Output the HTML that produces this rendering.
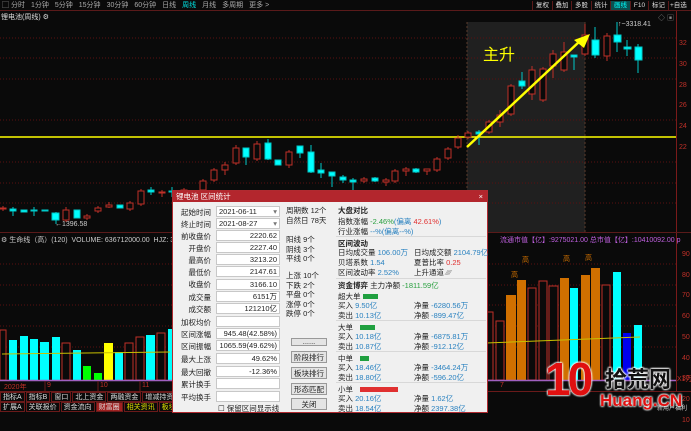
<!DOCTYPE html>
<html><head><meta charset="utf-8"><style>
*{margin:0;padding:0;box-sizing:border-box}
body{width:691px;height:413px;background:#0a0a0a;overflow:hidden;position:relative;font-family:"Liberation Sans","Noto Sans CJK SC",sans-serif;font-size:7px;color:#c8c8c8}
.a{position:absolute;white-space:nowrap}
#dlg{position:absolute;left:172px;top:190px;width:316px;height:223px;background:#f0f0f0;border:1px solid #b02a30;color:#222;font-size:7.5px}
#dlg .t{position:absolute;left:0;top:0;width:100%;height:11px;background:#b3262d;color:#fff;font-size:7.5px;padding-left:3px;line-height:11px}
.lb{position:absolute;left:0;width:38px;text-align:right}
.in{position:absolute;left:43px;width:64px;height:11px;background:#fff;border:1px solid #c8c8c8;text-align:right;padding-right:2px;line-height:10px;font-size:7.5px}
.bt{position:absolute;left:118px;width:36px;height:12px;background:#e4e4e4;border:1px solid #999;text-align:center;line-height:11px}
.bl{color:#2a82c0}.gr{color:#2aa040}.rd{color:#e03030}
.sep{position:absolute;left:163px;width:150px;height:1px;background:#d8d8d8}
.tb span{margin-right:6px}
.rb{position:absolute;top:1px;height:9px;border-left:1px solid #5a1a1a;color:#ddd;line-height:9px;font-size:6.5px;text-align:center;overflow:hidden}
.bb span{border:1px solid #6a1a1a;padding:0 2px;margin-right:1px;display:inline-block;height:10px;line-height:9px}
</style></head><body>
<svg class="a" style="left:0;top:0" width="691" height="413">
<rect x="467" y="22" width="118" height="210" fill="#202020"/>
<line x1="467" y1="22" x2="467" y2="232" stroke="#5a3a2a" stroke-dasharray="2,2"/>
<line x1="585" y1="22" x2="585" y2="232" stroke="#5a3a2a" stroke-dasharray="2,2"/>
<line x1="0" y1="10.5" x2="691" y2="10.5" stroke="#5a1a1a"/>
<g stroke="#5a1010" stroke-dasharray="1,2">
<line x1="0" y1="38" x2="676" y2="38"/><line x1="0" y1="58" x2="676" y2="58"/><line x1="0" y1="79" x2="676" y2="79"/><line x1="0" y1="120" x2="676" y2="120"/><line x1="0" y1="162" x2="676" y2="162"/><line x1="0" y1="183" x2="676" y2="183"/><line x1="0" y1="203" x2="676" y2="203"/>
<line x1="0" y1="264" x2="676" y2="264"/><line x1="0" y1="285" x2="676" y2="285"/><line x1="0" y1="305" x2="676" y2="305"/><line x1="0" y1="326" x2="676" y2="326"/><line x1="0" y1="347" x2="676" y2="347"/>
</g>
<line x1="676.5" y1="11" x2="676.5" y2="392" stroke="#7a1a1a"/>
<line x1="0" y1="232.5" x2="691" y2="232.5" stroke="#5a1a1a"/>
<line x1="0" y1="137" x2="676" y2="137" stroke="#ffff00" stroke-width="1.5"/>
<g stroke-width="1">
<g stroke="#c03028" fill="#0a0a0a">
<path d="M3 206V211M66 207V222M87 214V220M98 206V213M109 202V208M130 201V211M141 189V206M162 190V197M184 188V193M203 179V192M214 168V182M225 162V175M236 145V165M257 141V161M289 150V168M364 177V183M386 178V186M395 169V183M406 167V176M427 169V175M437 157V172M448 147V160M458 135V149M468 131V139M489 120V134M500 110V127M511 84V116M532 66V100M543 67V102M553 50V78M564 42V72M585 24V56M607 33V61"/>
<rect x="0" y="208" width="6" height="1"/><rect x="63" y="210" width="6" height="10"/><rect x="84" y="216" width="6" height="2"/><rect x="95" y="208" width="6" height="3"/><rect x="106" y="205" width="6" height="2"/><rect x="127" y="203" width="6" height="6"/><rect x="138" y="191" width="6" height="13"/><rect x="159" y="192" width="6" height="1"/><rect x="181" y="190" width="6" height="1"/><rect x="200" y="181" width="6" height="9"/><rect x="211" y="170" width="6" height="10"/><rect x="222" y="165" width="6" height="5"/><rect x="233" y="148" width="6" height="15"/><rect x="254" y="144" width="6" height="15"/><rect x="286" y="152" width="6" height="13"/><rect x="361" y="179" width="6" height="2"/><rect x="383" y="180" width="6" height="2"/><rect x="392" y="171" width="6" height="10"/><rect x="403" y="169" width="6" height="2"/><rect x="424" y="169" width="6" height="2"/><rect x="434" y="159" width="6" height="11"/><rect x="445" y="149" width="6" height="9"/><rect x="455" y="138" width="6" height="9"/><rect x="465" y="133" width="6" height="4"/><rect x="486" y="122" width="6" height="10"/><rect x="497" y="115" width="6" height="7"/><rect x="508" y="86" width="6" height="28"/><rect x="529" y="70" width="6" height="24"/><rect x="540" y="69" width="6" height="31"/><rect x="550" y="54" width="6" height="12"/><rect x="561" y="52" width="6" height="18"/><rect x="582" y="35" width="6" height="19"/><rect x="604" y="36" width="6" height="20"/>
</g>
<g stroke="#00c8c8" fill="#00ffff">
<path d="M13 207V216M34 207V216M56 212V224M151 187V195M172 187V197M246 148V165M268 139V160M300 146V158M311 145V173M321 163V178M332 172V187M343 175V183M353 178V190M375 177V182M416 168V173M479 130V145M522 72V89M574 55V70M595 27V58M617 22V52M627 40V56M638 44V73"/>
<rect x="10" y="209" width="6" height="2"/><rect x="21" y="210" width="6" height="2"/><rect x="31" y="210" width="6" height="1"/><rect x="42" y="210" width="6" height="1"/><rect x="52" y="213" width="7" height="7"/><rect x="74" y="210" width="6" height="8"/><rect x="117" y="205" width="6" height="3"/><rect x="148" y="190" width="6" height="2"/><rect x="169" y="191" width="6" height="1"/><rect x="243" y="148" width="6" height="9"/><rect x="265" y="143" width="6" height="16"/><rect x="275" y="160" width="6" height="5"/><rect x="297" y="146" width="6" height="7"/><rect x="308" y="152" width="6" height="20"/><rect x="318" y="170" width="6" height="3"/><rect x="329" y="172" width="6" height="4"/><rect x="340" y="177" width="6" height="3"/><rect x="350" y="180" width="6" height="2"/><rect x="372" y="178" width="6" height="3"/><rect x="413" y="169" width="6" height="3"/><rect x="476" y="132" width="6" height="2"/><rect x="519" y="81" width="6" height="5"/><rect x="571" y="55" width="6" height="2"/><rect x="592" y="40" width="7" height="15"/><rect x="614" y="35" width="7" height="7"/><rect x="624" y="47" width="7" height="2"/><rect x="635" y="47" width="7" height="13"/>
</g>
</g>
<line x1="467" y1="147" x2="580" y2="41" stroke="#ffff00" stroke-width="2.5"/>
<polygon points="590,34 574,40 584,48" fill="#ffff00"/>
<g stroke="#c03028" fill="#0a0a0a"><rect x="0" y="330" width="6" height="50"/><rect x="62" y="343" width="8" height="37"/><rect x="125" y="343" width="8" height="37"/><rect x="136" y="337" width="8" height="43"/><rect x="157" y="333" width="8" height="47"/><rect x="486" y="312" width="7" height="68"/><rect x="496" y="321" width="8" height="59"/><rect x="528" y="288" width="8" height="92"/><rect x="539" y="281" width="8" height="99"/><rect x="549" y="286" width="9" height="94"/><rect x="602" y="285" width="8" height="95"/></g>
<g fill="#00ffff"><rect x="9" y="340" width="8" height="40"/><rect x="20" y="336" width="8" height="44"/><rect x="30" y="339" width="8" height="41"/><rect x="40" y="342" width="9" height="38"/><rect x="52" y="337" width="8" height="43"/><rect x="73" y="350" width="8" height="30"/><rect x="115" y="352" width="8" height="28"/><rect x="146" y="335" width="9" height="45"/><rect x="168" y="329" width="7" height="51"/><rect x="570" y="288" width="8" height="92"/><rect x="613" y="272" width="8" height="108"/><rect x="634" y="325" width="8" height="55"/></g>
<g fill="#00ff00"><rect x="83" y="366" width="8" height="14"/><rect x="94" y="373" width="8" height="7"/></g>
<rect x="104" y="343" width="9" height="37" fill="#ffff00"/>
<g fill="#d07000"><rect x="506" y="295" width="10" height="85"/><rect x="517" y="280" width="9" height="100"/><rect x="560" y="278" width="9" height="102"/><rect x="581" y="275" width="9" height="105"/><rect x="591" y="268" width="9" height="112"/></g>
<rect x="623" y="333" width="8" height="47" fill="#0000ee"/>
<path d="M2 354L170 352M486 343L640 337" stroke="#c8c000" stroke-width="1"/>
<line x1="0" y1="380.5" x2="676" y2="380.5" stroke="#a060c0" stroke-width="1.5"/>
<line x1="0" y1="391.5" x2="691" y2="391.5" stroke="#6a1a1a"/>
<line x1="45" y1="381" x2="45" y2="391" stroke="#6a1a1a"/><line x1="98" y1="381" x2="98" y2="391" stroke="#6a1a1a"/><line x1="140" y1="381" x2="140" y2="391" stroke="#6a1a1a"/>
</svg>
<div class="a tb" style="left:2px;top:1px;line-height:9px;color:#aaa"><span>▢ 分时</span><span>1分钟</span><span>5分钟</span><span>15分钟</span><span>30分钟</span><span>60分钟</span><span>日线</span><span style="color:#00e0e0">周线</span><span>月线</span><span>多周期</span><span>更多 &gt;</span></div>
<div class="rb" style="left:532px;width:20px">复权</div><div class="rb" style="left:552px;width:19px">叠加</div><div class="rb" style="left:571px;width:20px">多股</div><div class="rb" style="left:591px;width:19px">统计</div><div class="rb" style="left:610px;width:20px;background:#0a5050;color:#00ffff">画线</div><div class="rb" style="left:630px;width:18px">F10</div><div class="rb" style="left:648px;width:20px">标记</div><div class="rb" style="left:668px;width:23px;text-align:left;padding-left:1px">+自选</div>
<div class="a" style="left:1px;top:12px;color:#ddd">锂电池(周线) ⚙</div>
<div class="a" style="left:658px;top:13px;color:#888">◇ ▣</div>
<div class="a" style="left:618px;top:21px;color:#ccc">↑~3318.41</div>
<div class="a" style="left:55px;top:221px;color:#ccc">←1396.58</div>
<div class="a" style="left:483px;top:41px;color:#ffff00;font-size:16px">主升</div>
<div class="a" style="left:679px;top:34px;color:#c03028;line-height:20.8px">32<br>30<br>28<br>26<br>24<br>22</div>
<div class="a" style="left:1px;top:235px;color:#ccc">⚙ 生命线（高）(120)&nbsp; VOLUME: 636712000.00&nbsp; HJZ: 3122</div>
<div class="a" style="left:500px;top:235px;color:#c060e0">流通市值【亿】:9275021.00 总市值【亿】:10410092.00 p</div>
<div class="a" style="left:682px;top:245px;color:#c03028;line-height:20.7px">90<br>80<br>70<br>60<br>50<br>40<br>30<br>20<br>10</div>
<div class="a" style="left:677px;top:374px;color:#c03028">X1万</div>
<div class="a" style="left:511px;top:270px;color:#d07000">高</div><div class="a" style="left:522px;top:255px;color:#d07000">高</div><div class="a" style="left:563px;top:254px;color:#d07000">高</div><div class="a" style="left:585px;top:253px;color:#d07000">高</div>
<div class="a" style="left:4px;top:382px;color:#c03028">2020年</div><div class="a" style="left:47px;top:382px;color:#c03028">9</div><div class="a" style="left:100px;top:382px;color:#c03028">10</div><div class="a" style="left:142px;top:382px;color:#c03028">11</div><div class="a" style="left:500px;top:382px;color:#c03028">7</div>
<div class="a bb" style="left:0;top:392px;color:#ddd"><span>指标A</span><span>指标B</span><span>窗口</span><span>北上资金</span><span>两融资金</span><span>增减持资金</span><span>打板资</span></div>
<div class="a bb" style="left:0;top:402px;color:#ddd"><span>扩展A</span><span>关联报价</span><span>资金流向</span><span style="background:#a02020">财富圈</span><span style="color:#e0e000">相关资讯</span><span style="color:#e0e000">板块资讯</span></div>
<div class="a" style="left:657px;top:403px;color:#ddd;font-size:6px">新用户福利</div>
<div class="a" style="left:545px;top:352px;color:#e01010;font-size:46px;font-weight:bold;letter-spacing:-3px;text-shadow:0 0 2px #fff,0 0 2px #fff,0 0 2px #fff">10</div>
<div class="a" style="left:605px;top:362px;color:#111;font-size:22px;font-weight:bold;text-shadow:0 0 2px #fff,0 0 2px #fff,0 0 2px #fff,0 0 2px #fff">拾荒网</div>
<div class="a" style="left:600px;top:391px;color:#e01010;font-size:17px;font-weight:bold;text-shadow:0 0 2px #fff,0 0 2px #fff,0 0 2px #fff">Huang.CN</div>
<div id="dlg">
<div class="t">锂电池 区间统计<span style="position:absolute;right:4px">×</span></div>
<div class="lb" style="top:16px">起始时间</div><div class="in" style="top:15px;text-align:left;padding-left:2px">2021-06-11<span style="float:right;color:#777">▾</span></div>
<div class="lb" style="top:28px">终止时间</div><div class="in" style="top:27px;text-align:left;padding-left:2px">2021-08-27<span style="float:right;color:#777">▾</span></div>
<div class="lb" style="top:40px">前收盘价</div><div class="in" style="top:39px">2220.62</div>
<div class="lb" style="top:52px">开盘价</div><div class="in" style="top:51px">2227.40</div>
<div class="lb" style="top:64px">最高价</div><div class="in" style="top:63px">3213.20</div>
<div class="lb" style="top:76px">最低价</div><div class="in" style="top:75px">2147.61</div>
<div class="lb" style="top:88px">收盘价</div><div class="in" style="top:88px">3166.10</div>
<div class="lb" style="top:101px">成交量</div><div class="in" style="top:100px">6151万</div>
<div class="lb" style="top:113px">成交额</div><div class="in" style="top:112px">121210亿</div>
<div class="lb" style="top:126px">加权均价</div><div class="in" style="top:125px"></div>
<div class="lb" style="top:138px">区间涨幅</div><div class="in" style="top:137px">945.48(42.58%)</div>
<div class="lb" style="top:150px">区间振幅</div><div class="in" style="top:149px">1065.59(49.62%)</div>
<div class="lb" style="top:163px">最大上涨</div><div class="in" style="top:162px">49.62%</div>
<div class="lb" style="top:176px">最大回撤</div><div class="in" style="top:175px">-12.36%</div>
<div class="lb" style="top:188px">累计换手</div><div class="in" style="top:187px"></div>
<div class="lb" style="top:201px">平均换手</div><div class="in" style="top:200px"></div>
<div class="a" style="left:45px;top:212px">☐ 保留区间显示线</div>
<div class="a" style="left:113px;top:15px;line-height:9.5px">周期数 12个<br>自然日 78天</div>
<div class="a" style="left:113px;top:44px;line-height:9.5px">阳线 9个<br>阴线 3个<br>平线 0个</div>
<div class="a" style="left:113px;top:80px;line-height:9.5px">上涨 10个<br>下跌 2个<br>平盘 0个<br>涨停 0个<br>跌停 0个</div>
<div class="bt" style="top:147px;height:8px;line-height:5px">......</div>
<div class="bt" style="top:160px">阶段排行</div><div class="bt" style="top:176px">板块排行</div><div class="bt" style="top:192px">形态匹配</div><div class="bt" style="top:207px">关闭</div>
<div class="a" style="left:165px;top:14px;font-weight:bold">大盘对比</div>
<div class="a" style="left:165px;top:25px">指数涨幅 <span class="gr">-2.46%</span><span class="bl">(偏离 </span><span class="rd">42.61%</span><span class="bl">)</span></div>
<div class="a" style="left:165px;top:35px">行业涨幅 <span class="bl">--%(偏离--%)</span></div>
<div class="sep" style="top:45px"></div>
<div class="a" style="left:165px;top:47px;font-weight:bold">区间波动</div>
<div class="a" style="left:165px;top:57px;line-height:10px">日均成交量 <span class="bl">106.00万</span><br>贝塔系数 <span class="bl">1.54</span><br>区间波动率 <span class="bl">2.52%</span></div>
<div class="a" style="left:241px;top:57px;line-height:10px">日均成交额 <span class="bl">2104.79亿</span><br>夏普比率 <span class="rd">0.25</span><br>上升通道 <span style="color:#888">⁄⁄⁄⁄</span></div>
<div class="sep" style="top:87px"></div>
<div class="a" style="left:165px;top:89px"><b>资金博弈</b> 主力净额 <span class="gr">-1811.59亿</span></div>
<div class="a" style="left:165px;top:100px">超大单 <span style="display:inline-block;width:15px;height:5px;background:#20a040"></span></div>
<div class="a" style="left:165px;top:110px;line-height:9.5px">买入 <span class="bl">9.50亿</span><br>卖出 <span class="bl">10.13亿</span></div>
<div class="a" style="left:241px;top:110px;line-height:9.5px">净量 <span class="bl">-6280.56万</span><br>净额 <span class="bl">-899.47亿</span></div>
<div class="sep" style="top:129px"></div>
<div class="a" style="left:165px;top:131px">大单 <span style="display:inline-block;width:15px;height:5px;margin-left:5px;background:#20a040"></span></div>
<div class="a" style="left:165px;top:141px;line-height:9.5px">买入 <span class="bl">10.18亿</span><br>卖出 <span class="bl">10.87亿</span></div>
<div class="a" style="left:241px;top:141px;line-height:9.5px">净量 <span class="bl">-6875.81万</span><br>净额 <span class="bl">-912.12亿</span></div>
<div class="sep" style="top:160px"></div>
<div class="a" style="left:165px;top:162px">中单 <span style="display:inline-block;width:9px;height:5px;margin-left:5px;background:#20a040"></span></div>
<div class="a" style="left:165px;top:172px;line-height:9.5px">买入 <span class="bl">18.46亿</span><br>卖出 <span class="bl">18.80亿</span></div>
<div class="a" style="left:241px;top:172px;line-height:9.5px">净量 <span class="bl">-3464.24万</span><br>净额 <span class="bl">-596.20亿</span></div>
<div class="sep" style="top:191px"></div>
<div class="a" style="left:165px;top:193px">小单 <span style="display:inline-block;width:38px;height:5px;margin-left:5px;background:#e03030"></span></div>
<div class="a" style="left:165px;top:203px;line-height:9.5px">买入 <span class="bl">20.16亿</span><br>卖出 <span class="bl">18.54亿</span></div>
<div class="a" style="left:241px;top:203px;line-height:9.5px">净量 <span class="bl">1.62亿</span><br>净额 <span class="bl">2397.38亿</span></div>
</div>
</body></html>
